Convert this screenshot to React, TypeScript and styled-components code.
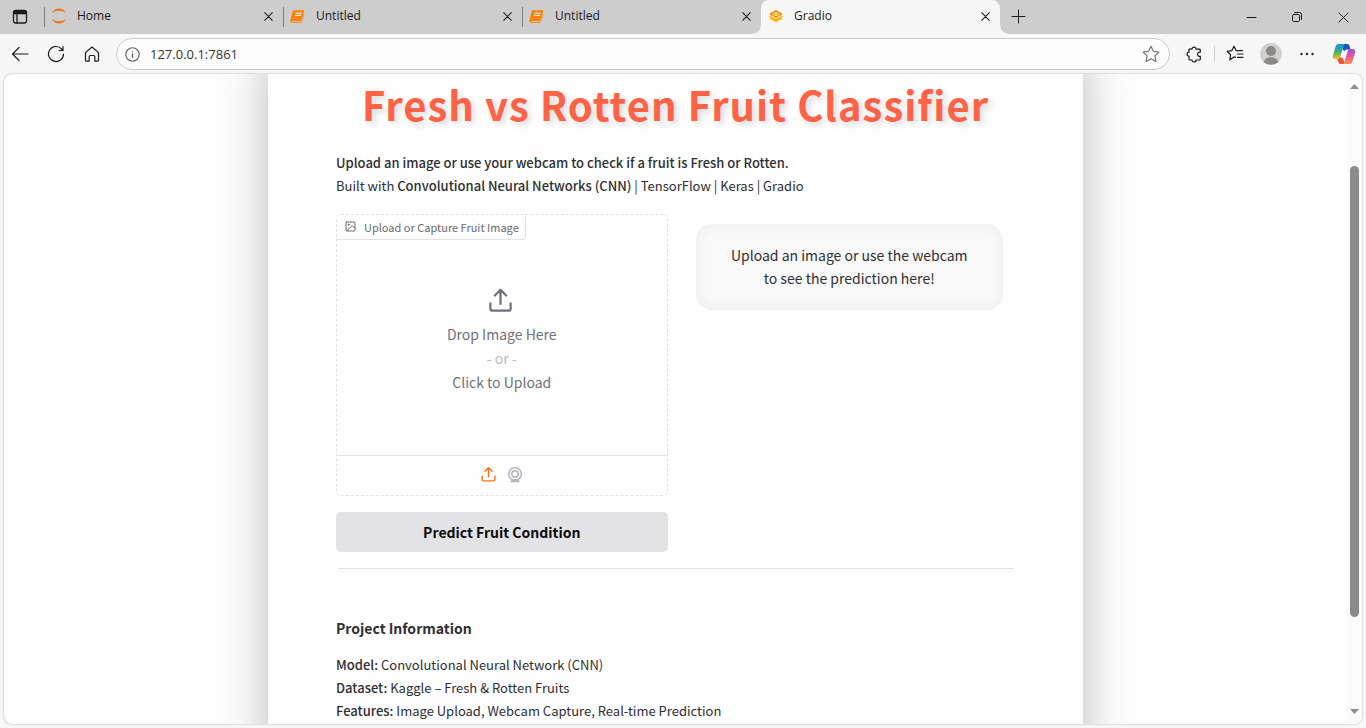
import React from "react";
import styled, { createGlobalStyle, css } from "styled-components";

const sans = `"Noto Sans CJK SC", "Noto Sans", sans-serif`;
const chromeFont = `"Open Sans", "Noto Sans", sans-serif`;

const GlobalStyle = createGlobalStyle`
  *, *::before, *::after { box-sizing: border-box; }
  html, body, #root { height: 100%; }
  body { margin: 0; background: #f7f7f7; }
  button { margin: 0; padding: 0; border: 0; background: none; font: inherit; color: inherit; cursor: pointer; }
  svg { display: block; flex: none; }
`;

/* ---------- browser window ---------- */

const Window = styled.div`
  display: flex;
  flex-direction: column;
  height: 100vh;
  overflow: hidden;
  background: #f7f7f7;
  font-family: ${chromeFont};
  color: #1b1b1b;
`;

const TabStrip = styled.header`
  display: flex;
  flex: none;
  height: 34px;
  background: #cdcdcd;
`;

const SidebarButton = styled.button`
  display: flex;
  align-items: center;
  width: 44px;
  padding-left: 12px;
`;

const TabList = styled.div`
  display: flex;
  flex: 0 1 956px;
  min-width: 0;
`;

const TabItem = styled.div<{ $active?: boolean }>`
  position: relative;
  display: flex;
  flex: 1 1 0;
  align-items: center;
  min-width: 0;
  height: 34px;
  padding: 0 7px 2px 7px;
  ${(p) =>
    p.$active
      ? css`
          background: #f7f7f7;
          border-radius: 8px 8px 0 0;
          &::before,
          &::after {
            content: "";
            position: absolute;
            bottom: 0;
            width: 8px;
            height: 8px;
          }
          &::before {
            right: 100%;
            background: radial-gradient(circle at 0 0, #cdcdcd 7px, #f7f7f7 8px);
          }
          &::after {
            left: 100%;
            background: radial-gradient(circle at 100% 0, #cdcdcd 7px, #f7f7f7 8px);
          }
        `
      : css`
          &::before {
            content: "";
            position: absolute;
            left: 0;
            top: 7px;
            width: 1px;
            height: 20px;
            background: #7b7b7b;
          }
        `}
`;

const TabTitle = styled.button`
  display: flex;
  flex: 1;
  align-items: center;
  gap: 10px;
  min-width: 0;
  font-size: 12px;
  line-height: 16px;
`;

const CloseButton = styled.button`
  display: grid;
  place-items: center;
  width: 16px;
  height: 16px;
`;

const NewTab = styled.button`
  display: grid;
  place-items: center;
  width: 36px;
  height: 32px;
`;

const WindowControls = styled.div`
  display: flex;
  margin-left: auto;
`;

const WindowButton = styled.button`
  display: grid;
  place-items: center;
  width: 46px;
  height: 34px;
`;

const Toolbar = styled.nav`
  display: flex;
  flex: none;
  align-items: center;
  height: 40px;
  padding: 0 4px 0 2px;
`;

const ToolButton = styled.button`
  display: grid;
  place-items: center;
  flex: none;
  width: 36px;
  height: 32px;
`;

const AddressBar = styled.div`
  display: flex;
  flex: 1;
  align-items: center;
  gap: 10px;
  height: 32px;
  margin: 0 6px;
  padding: 0 9px 0 8px;
  border: 1px solid #cbcbcb;
  border-radius: 16px;
  background: #fdfdfd;
`;

const AddressInput = styled.input`
  flex: 1;
  min-width: 0;
  padding: 0;
  border: 0;
  outline: 0;
  background: transparent;
  color: #333333;
  font: 13px/20px ${chromeFont};
`;

const Divider = styled.span`
  width: 1px;
  height: 16px;
  margin: 0 2px;
  background: #cfcfcf;
`;

const CopilotButton = styled(ToolButton)`
  margin-left: 1px;
`;

const Viewport = styled.div`
  display: flex;
  flex: 1;
  min-height: 0;
  margin: 0 4px 4px;
  overflow: hidden;
  border-radius: 8px;
  background: #fefefe;
  box-shadow: 0 0 2px rgba(0, 0, 0, 0.35);
`;

const Scrollbar = styled.div`
  display: flex;
  flex: none;
  flex-direction: column;
  align-items: center;
  width: 15px;
  padding: 10px 0 10px;
  background: #fcfcfc;
`;

const Track = styled.div`
  flex: 1;
  width: 9px;
  padding-top: 77px;
`;

const Thumb = styled.div`
  height: 83%;
  border-radius: 5px;
  background: #8b8b8b;
`;

/* ---------- page ---------- */

const PageArea = styled.div`
  flex: 1;
  min-width: 0;
  overflow: hidden;
`;

const Page = styled.main`
  width: 100%;
  max-width: 815px;
  min-height: calc(100% + 60px);
  margin: 0 auto;
  padding: 0 68px 20px;
  background: #fefefe;
  box-shadow: 0 -20px 45px rgba(0, 0, 0, 0.27);
  font-family: ${sans};
  color: #2f2f33;
`;

const Title = styled.h1`
  margin: 0 0 17px;
  color: #ff6347;
  font-size: 40px;
  font-weight: 700;
  line-height: 60px;
  letter-spacing: 1px;
  text-align: center;
  text-shadow: 3px 3px 6px rgba(0, 0, 0, 0.15);
`;

const Prose = styled.p`
  margin: 0;
  font-size: 13px;
  line-height: 23px;

  strong {
    font-weight: 500;
  }
`;

const Columns = styled.div`
  display: grid;
  grid-template-columns: 1fr 1fr;
  gap: 16px;
  margin-top: 17px;
`;

const Stack = styled.div`
  display: flex;
  flex-direction: column;
  gap: 16px;
`;

const UploadBlock = styled.section`
  position: relative;
  display: flex;
  flex-direction: column;
  height: 282px;
  border: 1px dashed #e2e2e5;
  border-radius: 5px;
`;

const BlockLabel = styled.h2`
  position: absolute;
  top: 0;
  left: 0;
  display: flex;
  align-items: center;
  gap: 8px;
  height: 25px;
  margin: 0;
  padding: 0 6px 1px 8px;
  border: solid #e2e2e5;
  border-width: 0 1px 1px 0;
  border-radius: 4px 0 4px 0;
  color: #6b6b74;
  font-size: 11px;
  font-weight: 400;
  line-height: 18px;
`;

const DropZone = styled.button`
  display: flex;
  flex: 1;
  flex-direction: column;
  align-items: center;
  justify-content: center;
  padding-top: 11px;
  color: #71717a;
  font-size: 14px;
  line-height: 24px;

  svg {
    margin: 0 3px 8px 0;
  }
`;

const Or = styled.span`
  color: #bbbbc2;
`;

const Sources = styled.div`
  display: flex;
  align-items: center;
  justify-content: center;
  gap: 9px;
  height: 40px;
  padding-bottom: 2px;
  border-top: 1px solid #e2e2e5;
`;

const SourceButton = styled.button<{ $active?: boolean }>`
  color: ${(p) => (p.$active ? "#f97316" : "#b5b5bc")};
`;

const PredictButton = styled.button`
  height: 40px;
  border-radius: 5px;
  background: #e3e3e6;
  color: #0b0b0c;
  font-size: 14px;
  font-weight: 700;
  line-height: 24px;
`;

const ResultCard = styled.div`
  align-self: start;
  margin: 10px 12px 0;
  padding: 20px 30px;
  border-radius: 16px;
  background: #f9f9f9;
  box-shadow: inset 0 0 15px rgba(0, 0, 0, 0.05);
  font-size: 14px;
  line-height: 23px;
  text-align: center;
`;

const Rule = styled.hr`
  height: 1px;
  margin: 16px 2px 47px;
  border: 0;
  background: #e2e2e2;
`;

const SectionTitle = styled.h3`
  margin: 0 0 13px;
  font-size: 14px;
  font-weight: 700;
  line-height: 24px;
`;

/* ---------- drawings ---------- */

const line = { fill: "none", stroke: "currentColor", strokeLinecap: "round", strokeLinejoin: "round" } as const;

const UploadIcon = ({ size, weight = 2 }: { size: number; weight?: number }) => (
  <svg width={size} height={size} viewBox="0 0 24 24" {...line} strokeWidth={weight} aria-hidden>
    <path d="M21 14.5V19a2 2 0 0 1-2 2H5a2 2 0 0 1-2-2v-4.500M17 7.500l-5-5-5 5M12 2.500V15" />
  </svg>
);

const WebcamIcon = () => (
  <svg width="18" height="18" viewBox="0 0 18 18" {...line} aria-hidden>
    <circle cx="9" cy="8" r="6.300" strokeWidth="1.600" />
    <circle cx="9" cy="8" r="3.200" strokeWidth="1.600" />
    <path d="M5.800 14 4.800 15.800h8.400L12.200 14Z" fill="currentColor" strokeWidth="1" />
  </svg>
);

const ImageIcon = () => (
  <svg width="11" height="11" viewBox="0 0 11 11" {...line} aria-hidden>
    <rect x="1" y="1" width="9" height="9" rx=".6" />
    <circle cx="3.700" cy="3.700" r=".6" />
    <path d="M2 9.500 7.200 4.700 10 7" />
  </svg>
);

const JupyterIcon = () => (
  <svg width="16" height="16" viewBox="0 0 16 16" fill="#f37726" aria-hidden>
    <path d="M.8 5.200C2 2.200 4.800.5 8 .5s6 1.700 7.200 4.700C13.500 3.600 11 2.700 8 2.700S2.500 3.600.8 5.200ZM.8 10.800C2.500 12.400 5 13.300 8 13.300s5.500-.9 7.200-2.500C14 13.800 11.200 15.500 8 15.500S2 13.800.8 10.800Z" />
  </svg>
);

const NotebookIcon = () => (
  <svg width="16" height="16" viewBox="0 0 16 16" aria-hidden>
    <path d="M4 2.300h9.200c.7 0 1 .5.8 1.200l-2.200 8.300c-.2.700-.7 1.100-1.400 1.100H2.600c-.8 0-1 .8-.2.900h8.500c.7 0 1-.3 1.200-.9l1.900-7.200.4.500-1.900 7.300c-.2.800-.8 1.200-1.600 1.200H2.200C.8 14.700 0 13.600.4 12.300L2.600 3.500C2.800 2.700 3.300 2.300 4 2.300Z" fill="#f98207" />
    <path d="M5.600 5.200h6M5 7.300h6" stroke="#fff" strokeWidth="1" />
  </svg>
);

const GradioIcon = () => (
  <svg width="16" height="16" viewBox="0 0 16 16" fill="none" strokeLinejoin="round" aria-hidden>
    <path d="M8 3 13.500 6 8 9 2.500 6Z" stroke="#ff8c00" strokeWidth="1.600" />
    <path d="M2 10 8 13.200 14 10" stroke="#ffb400" strokeWidth="1.800" />
    <path d="M2 8.600 8 5.600 14 8.600 8 11.400Z" stroke="#ffb81c" strokeWidth="1.300" />
  </svg>
);

const CloseIcon = ({ size = 9, weight = 1.2 }: { size?: number; weight?: number }) => (
  <svg width={size} height={size} viewBox="0 0 10 10" {...line} strokeWidth={weight} aria-hidden>
    <path d="m.8.8 8.400 8.400M9.200.8.8 9.200" />
  </svg>
);

const star = "M8 1.200 10.100 5.600 15 6.300 11.500 9.700 12.300 14.600 8 12.300 3.700 14.600 4.500 9.700 1 6.300 5.900 5.600Z";

const CopilotIcon = () => (
  <svg width="24" height="22" viewBox="0 0 24 22" aria-hidden>
    <defs>
      <linearGradient id="cpA" x1="0" y1="0" x2="0" y2="1">
        <stop offset="0" stopColor="#1e8fe6" />
        <stop offset=".5" stopColor="#3fae7c" />
        <stop offset="1" stopColor="#f2c313" />
      </linearGradient>
      <linearGradient id="cpB" x1="0" y1="0" x2="0" y2="1">
        <stop offset="0" stopColor="#a04ce8" />
        <stop offset=".5" stopColor="#e8579a" />
        <stop offset="1" stopColor="#ff9350" />
      </linearGradient>
    </defs>
    <path d="M6 1h9.500c1 0 1.500.5 1.800 1.500L18.500 6.500H15c-1.500 0-2.200.8-2.600 2L9 4Z" fill="#1556c5" />
    <path d="M5 15.500c1.300 0 2-.8 2.400-2L11 15.500l2 5.500H8.600c-1 0-1.700-.5-2-1.500Z" fill="#f0523f" />
    <path d="M7 1h6.500c-1 .3-1.500 1-1.900 2.200L8.200 14c-.4 1.400-1.100 2-2.400 2H3.500C1 16 .3 14.300 1 12L3.600 3.600C4.200 1.800 5.200 1 7 1Z" fill="url(#cpA)" />
    <path d="M17 21h-6.500c1-.3 1.500-1 1.900-2.200L15.800 8c.4-1.400 1.100-2 2.400-2h2.300c2.500 0 3.200 1.700 2.500 4l-2.600 8.400c-.6 1.800-1.600 2.600-3.400 2.600Z" fill="url(#cpB)" />
  </svg>
);

const tabs = [
  { title: "Home", icon: <JupyterIcon /> },
  { title: "Untitled", icon: <NotebookIcon /> },
  { title: "Untitled", icon: <NotebookIcon /> },
  { title: "Gradio", icon: <GradioIcon />, active: true },
];

export default function App() {
  return (
    <Window>
      <GlobalStyle />
      <TabStrip>
        <SidebarButton aria-label="Tab actions">
          <svg width="16" height="16" viewBox="0 0 16 16" {...line} strokeWidth="1.300" aria-hidden>
            <rect x="1.500" y="1.500" width="13" height="12.500" rx="2.200" />
            <path d="M2 2.500h12v2.200H2z" fill="currentColor" />
            <path d="M5 5v9" />
          </svg>
        </SidebarButton>
        <TabList role="tablist">
          {tabs.map((tab, i) => (
            <TabItem key={i} $active={tab.active}>
              <TabTitle role="tab" aria-selected={!!tab.active}>
                {tab.icon}
                {tab.title}
              </TabTitle>
              <CloseButton aria-label={`Close ${tab.title}`}>
                <CloseIcon />
              </CloseButton>
            </TabItem>
          ))}
        </TabList>
        <NewTab aria-label="New tab">
          <svg width="15" height="15" viewBox="0 0 15 15" {...line} aria-hidden>
            <path d="M7.500 1v13M1 7.500h13" />
          </svg>
        </NewTab>
        <WindowControls>
          <WindowButton aria-label="Minimize">
            <svg width="11" height="11" viewBox="0 0 11 11" {...line} aria-hidden>
              <path d="M1 5.500h9" />
            </svg>
          </WindowButton>
          <WindowButton aria-label="Restore">
            <svg width="12" height="12" viewBox="0 0 12 12" {...line} aria-hidden>
              <rect x="1.500" y="3.500" width="7" height="7" rx="1.200" />
              <path d="M3.500 1.500H8.500a2 2 0 0 1 2 2V8.500" />
            </svg>
          </WindowButton>
          <WindowButton aria-label="Close window">
            <CloseIcon size={11} weight={0.9} />
          </WindowButton>
        </WindowControls>
      </TabStrip>

      <Toolbar aria-label="Browser">
        <ToolButton aria-label="Back">
          <svg width="18" height="16" viewBox="0 0 18 16" {...line} strokeWidth="1.100" aria-hidden>
            <path d="M17 8H1.500M8 1.500 1.500 8 8 14.500" />
          </svg>
        </ToolButton>
        <ToolButton aria-label="Refresh">
          <svg width="18" height="18" viewBox="0 0 18 18" {...line} strokeWidth="1.200" aria-hidden>
            <path d="M16.500 9A7.500 7.500 0 1 1 14.600 4L16 5.500M16 1.500v4h-4" />
          </svg>
        </ToolButton>
        <ToolButton aria-label="Home page">
          <svg width="18" height="18" viewBox="0 0 18 18" {...line} strokeWidth="1.200" aria-hidden>
            <path d="M2.500 7.600 9 2l6.500 5.600v7.700a.8.800 0 0 1-.8.800h-2.900v-4.300a1.300 1.300 0 0 0-1.300-1.300h-3a1.300 1.300 0 0 0-1.300 1.300v4.300H3.300a.8.800 0 0 1-.8-.8Z" />
          </svg>
        </ToolButton>
        <AddressBar>
          <svg width="15" height="15" viewBox="0 0 15 15" {...line} color="#5f5f5f" aria-hidden>
            <circle cx="7.500" cy="7.500" r="6.700" strokeWidth="1.100" />
            <path d="M7.500 7v3.500M7.500 4.600v.1" strokeWidth="1.300" />
          </svg>
          <AddressInput aria-label="Address" defaultValue="127.0.0.1:7861" />
          <svg width="18" height="18" viewBox="0 0 16 16" {...line} color="#6e6e6e" aria-hidden>
            <path d={star} />
          </svg>
        </AddressBar>
        <ToolButton aria-label="Extensions">
          <svg width="18" height="18" viewBox="0 0 18 18" {...line} strokeWidth="1.200" aria-hidden>
            <path d="M4 4.200h3a2 2 0 1 1 4 0h3.500a.8.800 0 0 1 .8.800v2.200a2.100 2.100 0 1 0 0 4v3a.8.800 0 0 1-.8.800H11a2 2 0 0 1-4 0H4.800a.8.800 0 0 1-.8-.8v-3a2 2 0 1 1 0-4Z" />
          </svg>
        </ToolButton>
        <Divider />
        <ToolButton aria-label="Favorites">
          <svg width="18" height="18" viewBox="0 0 18 18" {...line} strokeWidth="1.200" aria-hidden>
            <path d="M9.500 12.400 8 11.900l-4.200 2.900.8-5.100L1 6.300l4.900-.7L8 1.200l2 4.400h6.500M11.500 9H17M11.500 12.400H17" />
          </svg>
        </ToolButton>
        <ToolButton aria-label="Profile">
          <svg width="22" height="22" viewBox="0 0 22 22" aria-hidden>
            <circle cx="11" cy="11" r="11" fill="#d2d0ce" />
            <circle cx="11" cy="8" r="5" fill="#8a8886" />
            <path d="M3.600 19C5 15.600 7.500 14.300 11 14.300s6 1.300 7.400 4.700A11 11 0 0 1 3.600 19Z" fill="#8a8886" />
          </svg>
        </ToolButton>
        <ToolButton aria-label="Settings and more">
          <svg width="16" height="4" viewBox="0 0 16 4" fill="#222" aria-hidden>
            <circle cx="2.500" cy="2" r="1.200" />
            <circle cx="8" cy="2" r="1.200" />
            <circle cx="13.500" cy="2" r="1.200" />
          </svg>
        </ToolButton>
        <CopilotButton aria-label="Copilot">
          <CopilotIcon />
        </CopilotButton>
      </Toolbar>

      <Viewport>
        <PageArea>
          <Page>
            <Title>Fresh vs Rotten Fruit Classifier</Title>
            <Prose>
              <strong>Upload an image or use your webcam to check if a fruit is Fresh or Rotten.</strong>
              <br />
              Built with <strong>Convolutional Neural Networks (CNN)</strong> | TensorFlow | Keras | Gradio
            </Prose>

            <Columns>
              <Stack>
                <UploadBlock>
                  <BlockLabel>
                    <ImageIcon />
                    Upload or Capture Fruit Image
                  </BlockLabel>
                  <DropZone>
                    <UploadIcon size={27} />
                    <span>Drop Image Here</span>
                    <Or>- or -</Or>
                    <span>Click to Upload</span>
                  </DropZone>
                  <Sources>
                    <SourceButton $active aria-label="Upload file">
                      <UploadIcon size={17} />
                    </SourceButton>
                    <SourceButton aria-label="Capture from webcam">
                      <WebcamIcon />
                    </SourceButton>
                  </Sources>
                </UploadBlock>
                <PredictButton>Predict Fruit Condition</PredictButton>
              </Stack>
              <ResultCard>
                Upload an image or use the webcam
                <br />
                to see the prediction here!
              </ResultCard>
            </Columns>

            <Rule />

            <SectionTitle>Project Information</SectionTitle>
            <Prose>
              <strong>Model:</strong> Convolutional Neural Network (CNN)
              <br />
              <strong>Dataset:</strong> Kaggle – Fresh &amp; Rotten Fruits
              <br />
              <strong>Features:</strong> Image Upload, Webcam Capture, Real-time Prediction
            </Prose>
          </Page>
        </PageArea>
        <Scrollbar aria-hidden>
          <svg width="9" height="5" viewBox="0 0 9 5" fill="#8b8b8b">
            <path d="M4.500 0 9 5H0Z" />
          </svg>
          <Track>
            <Thumb />
          </Track>
          <svg width="9" height="5" viewBox="0 0 9 5" fill="#8b8b8b">
            <path d="M0 0h9L4.500 5Z" />
          </svg>
        </Scrollbar>
      </Viewport>
    </Window>
  );
}
